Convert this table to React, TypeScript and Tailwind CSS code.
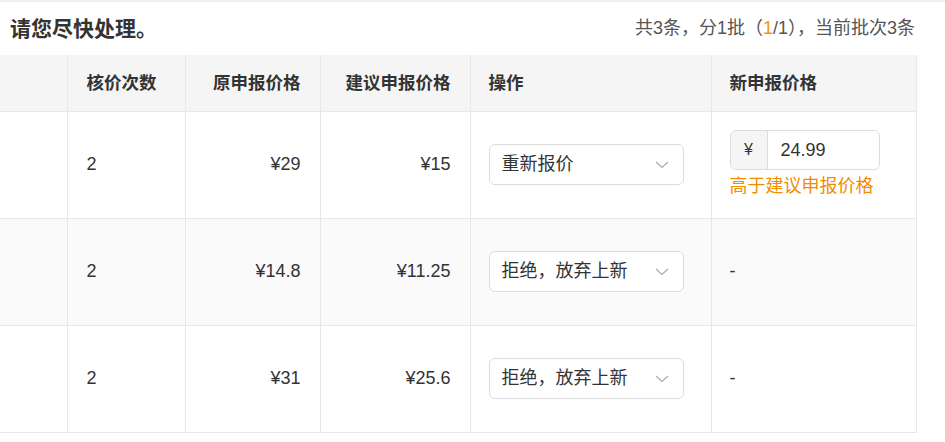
import React from 'react';

type Row = {
  times: string;
  original: string;
  suggested: string;
  action: string;
  newPrice?: string;
};

const rows: Row[] = [
  { times: '2', original: '¥29', suggested: '¥15', action: '重新报价', newPrice: '24.99' },
  { times: '2', original: '¥14.8', suggested: '¥11.25', action: '拒绝，放弃上新' },
  { times: '2', original: '¥31', suggested: '¥25.6', action: '拒绝，放弃上新' },
];

const font = { fontFamily: '"Liberation Sans", "Noto Sans CJK SC", sans-serif' };

export default function App() {
  return (
    <div className="h-[442px] w-[945px] overflow-hidden border-t-2 border-[#eeeeee] bg-white text-[#333]" style={font}>
      <div className="flex h-[53px] items-center justify-between pl-[10px] pr-[30px]">
        <h2 className="text-[21px] font-semibold text-[#333]">请您尽快处理。</h2>
        <p className="text-[18px] text-[#555]">
          共3条，分1批（<span className="text-[#f39800]">1</span>/1），当前批次3条
        </p>
      </div>
      <table className="w-[916px] table-fixed border-collapse text-[18px]">
        <colgroup>
          <col className="w-[67px]" />
          <col className="w-[118px]" />
          <col className="w-[135px]" />
          <col className="w-[150px]" />
          <col className="w-[241px]" />
          <col className="w-[205px]" />
        </colgroup>
        <thead>
          <tr className="h-[56px] bg-[#f5f5f5] text-[17.5px] text-[#333]">
            <th className="border-r border-b border-[#e8e8e8]"></th>
            <th className="border border-t-0 border-[#e8e8e8] pl-[19px] text-left font-semibold">核价次数</th>
            <th className="border border-t-0 border-[#e8e8e8] pr-[19px] text-right font-semibold">原申报价格</th>
            <th className="border border-t-0 border-[#e8e8e8] pr-[19px] text-right font-semibold">建议申报价格</th>
            <th className="border border-t-0 border-[#e8e8e8] pl-[18px] text-left font-semibold">操作</th>
            <th className="border border-t-0 border-[#e8e8e8] pl-[18px] text-left font-semibold">新申报价格</th>
          </tr>
        </thead>
        <tbody>
          {rows.map((row, i) => (
            <tr key={i} className={`h-[107px] ${i === 1 ? 'bg-[#fafafa]' : 'bg-white'}`}>
              <td className="border-r border-b border-[#e8e8e8]"></td>
              <td className="border border-[#e8e8e8] pl-[19px]">{row.times}</td>
              <td className="border border-[#e8e8e8] pr-[19px] text-right">{row.original}</td>
              <td className="border border-[#e8e8e8] pr-[19px] text-right">{row.suggested}</td>
              <td className="border border-[#e8e8e8] pl-[18px]">
                <Select value={row.action} />
              </td>
              <td className="border border-[#e8e8e8] pl-[18px]">
                {row.newPrice ? <PriceInput value={row.newPrice} /> : <span>-</span>}
              </td>
            </tr>
          ))}
        </tbody>
      </table>
    </div>
  );
}

function Select({ value }: { value: string }) {
  return (
    <div className="flex h-[41px] w-[195px] items-center justify-between rounded-[6px] border border-[#dcdcdc] bg-white pl-[12px] pr-[14px]">
      <span className="text-[18px] text-[#333]">{value}</span>
      <svg width="14" height="8" viewBox="0 0 14 8" fill="none">
        <path d="M1 1l6 5.5L13 1" stroke="#aaa" strokeWidth="1.2" />
      </svg>
    </div>
  );
}

function PriceInput({ value }: { value: string }) {
  return (
    <div className="flex flex-col gap-[4px] pt-[2px] pb-[3px]">
      <div className="flex h-[40px] w-[150px] overflow-hidden rounded-[6px] border border-[#dcdcdc]">
        <div className="flex w-[37px] items-center justify-center border-r border-[#dcdcdc] bg-[#f5f5f5] text-[16px]">¥</div>
        <div className="flex flex-1 items-center bg-white pl-[13px] text-[18px]">{value}</div>
      </div>
      <span className="text-[18px] leading-[24px] text-[#f08c00]">高于建议申报价格</span>
    </div>
  );
}
